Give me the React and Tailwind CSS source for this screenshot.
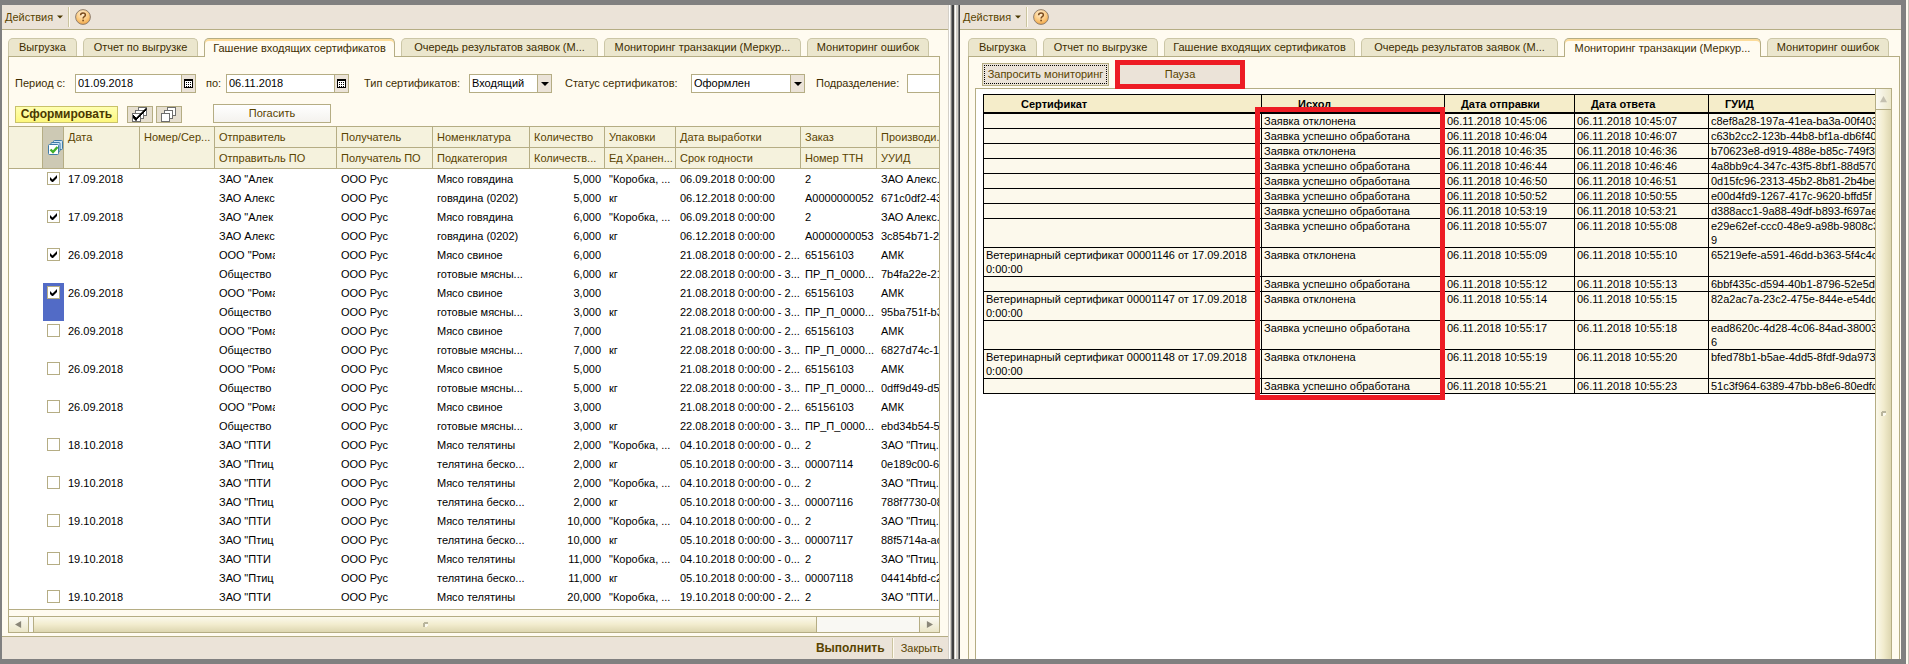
import React, { useState } from 'react';

const TABS = [
  { id: 'export', label: 'Выгрузка', width: 'w-[69px]' },
  { id: 'report', label: 'Отчет по выгрузке', width: 'w-[115px]' },
  { id: 'redeem', label: 'Гашение входящих сертификатов', width: 'w-[191px]' },
  { id: 'queue', label: 'Очередь результатов заявок (М...', width: 'w-[197px]' },
  { id: 'monitor', label: 'Мониторинг транзакции (Меркур...', width: 'w-[197px]' },
  { id: 'errors', label: 'Мониторинг ошибок', width: 'w-[122px]' },
];

const GRID_COLUMNS = [
  { top: 'Отправитель', bottom: 'Отправитьль ПО' },
  { top: 'Получатель', bottom: 'Получатель ПО' },
  { top: 'Номенклатура', bottom: 'Подкатегория' },
  { top: 'Количество', bottom: 'Количеств...' },
  { top: 'Упаковки', bottom: 'Ед Хранен...' },
  { top: 'Дата выработки', bottom: 'Срок годности' },
  { top: 'Заказ', bottom: 'Номер ТТН' },
  { top: 'Производи...', bottom: 'УУИД' },
];

const RUS = 'ООО Рус';
const BOX = '"Коробка, ...';

const beef = (qty, ttn, uuid) => ({
  date: '17.09.2018',
  checked: true,
  lines: [
    ['ЗАО "Алек', RUS, 'Мясо говядина', qty, BOX, '06.09.2018 0:00:00', '2', 'ЗАО Алекс...'],
    ['ЗАО Алекс', RUS, 'говядина (0202)', qty, 'кг', '06.12.2018 0:00:00', ttn, uuid],
  ],
});

const pork = (qty, uuid, checked = false) => ({
  date: '26.09.2018',
  checked,
  lines: [
    ['ООО "Рома', RUS, 'Мясо свиное', qty, '', '21.08.2018 0:00:00 - 2...', '65156103', 'АМК'],
    ['Общество', RUS, 'готовые мясны...', qty, 'кг', '22.08.2018 0:00:00 - 3...', 'ПР_П_0000...', uuid],
  ],
});

const veal = (date, qty, ttn, uuid) => ({
  date,
  checked: false,
  lines: [
    ['ЗАО "ПТИ', RUS, 'Мясо телятины', qty, BOX, '04.10.2018 0:00:00 - 0...', '2', 'ЗАО "Птиц...'],
    ['ЗАО "Птиц', RUS, 'телятина беско...', qty, 'кг', '05.10.2018 0:00:00 - 3...', ttn, uuid],
  ],
});

const RECORDS = [
  beef('5,000', 'A0000000052', '671c0df2-43'),
  beef('6,000', 'A0000000053', '3c854b71-2'),
  pork('6,000', '7b4fa22e-21', true),
  pork('3,000', '95ba751f-b3', true),
  pork('7,000', '6827d74c-1'),
  pork('5,000', '0dff9d49-d5'),
  pork('3,000', 'ebd34b54-5'),
  veal('18.10.2018', '2,000', '00007114', '0e189c00-6'),
  veal('19.10.2018', '2,000', '00007116', '788f7730-08'),
  veal('19.10.2018', '10,000', '00007117', '88f5714a-ac'),
  veal('19.10.2018', '11,000', '00007118', '04414bfd-c2'),
  {
    date: '19.10.2018',
    checked: false,
    lines: [['ЗАО "ПТИ', RUS, 'Мясо телятины', '20,000', BOX, '19.10.2018 0:00:00 - 2...', '2', 'ЗАО "ПТИ...']],
  },
];

const SELECTED_ROW = 3;

const REJECTED = 'Заявка отклонена';
const DONE = 'Заявка успешно обработана';

const LOG = [
  ['', REJECTED, '10:45:06', '10:45:07', 'c8ef8a28-197a-41ea-ba3a-00f403'],
  ['', DONE, '10:46:04', '10:46:07', 'c63b2cc2-123b-44b8-bf1a-db6f40'],
  ['', REJECTED, '10:46:35', '10:46:36', 'b70623e8-d919-488e-b85c-749f30'],
  ['', DONE, '10:46:44', '10:46:46', '4a8bb9c4-347c-43f5-8bf1-88d570'],
  ['', DONE, '10:46:50', '10:46:51', '0d15fc96-2313-45b2-8b81-2b4be2'],
  ['', DONE, '10:50:52', '10:50:55', 'e00d4fd9-1267-417c-9620-bffd5f'],
  ['', DONE, '10:53:19', '10:53:21', 'd388acc1-9a88-49df-b893-f697ae'],
  ['', DONE, '10:55:07', '10:55:08', 'e29e62ef-ccc0-48e9-a98b-9808c3\n9'],
  ['Ветеринарный сертификат 00001146 от 17.09.2018\n0:00:00', REJECTED, '10:55:09', '10:55:10', '65219efe-a591-46dd-b363-5f4c4c'],
  ['', DONE, '10:55:12', '10:55:13', '6bbf435c-d594-40b1-8796-52e5d9'],
  ['Ветеринарный сертификат 00001147 от 17.09.2018\n0:00:00', REJECTED, '10:55:14', '10:55:15', '82a2ac7a-23c2-475e-844e-e54dd'],
  ['', DONE, '10:55:17', '10:55:18', 'ead8620c-4d28-4c06-84ad-38003\n6'],
  ['Ветеринарный сертификат 00001148 от 17.09.2018\n0:00:00', REJECTED, '10:55:19', '10:55:20', 'bfed78b1-b5ae-4dd5-8fdf-9da973'],
  ['', DONE, '10:55:21', '10:55:23', '51c3f964-6389-47bb-b8e6-80edfc'],
];

function HelpIcon() {
  return (
    <svg viewBox="0 0 16 16" className="size-4">
      <defs>
        <radialGradient id="help" cx="0.45" cy="0.3" r="0.75">
          <stop offset="0" stopColor="#fff0d4" />
          <stop offset="0.6" stopColor="#fbc77a" />
          <stop offset="1" stopColor="#ef9f3c" />
        </radialGradient>
      </defs>
      <circle cx="8" cy="8" r="7.4" fill="url(#help)" stroke="#8f7f70" />
      <path d="M5.6 6.2c0-3 4.8-3 4.8-.2 0 1.8-2.3 1.6-2.3 3.5" fill="none" stroke="#7a4a1c" strokeWidth="1.5" />
      <rect x="7.3" y="10.7" width="1.6" height="1.6" fill="#7a4a1c" />
    </svg>
  );
}

function CalendarIcon() {
  return (
    <svg viewBox="0 0 9 9" className="size-[9px]" shapeRendering="crispEdges">
      <rect width="9" height="9" fill="#000" />
      <rect x="1" y="2" width="7" height="6" fill="#fff" />
      <path d="M2 3h1v1H2zM4 3h1v1H4zM6 3h1v1H6zM2 5h1v1H2zM4 5h1v1H4zM6 5h1v1H6zM2 7h1v1H2zM4 7h1v1H4zM6 7h1v1H6z" fill="#000" />
    </svg>
  );
}

function StackIcon({ checked = false }) {
  return (
    <svg viewBox="0 0 16 15" className="h-[15px] w-4" shapeRendering="crispEdges">
      <g fill="#fff" stroke="#6e6e6e">
        <rect x="6.5" y="0.5" width="8" height="8" />
        <rect x="3.5" y="3.5" width="8" height="8" />
        <rect x="0.5" y="6.5" width="8" height="8" />
      </g>
      {checked && (
        <path d="M1 8l3 3L14 1v2L4 13.500L1 11z" fill="#000" stroke="#000" strokeWidth="0.6" />
      )}
    </svg>
  );
}

function CheckedPagesIcon() {
  return (
    <svg viewBox="0 0 15 15" className="size-[15px]">
      <g fill="#cfe4f4" stroke="#3f7ba8">
        <rect x="5.500" y="0.5" width="9" height="9" rx="1" />
        <rect x="3" y="2.500" width="9" height="9" rx="1" />
        <rect x="0.5" y="4.500" width="10" height="10" rx="1" fill="#fff" />
      </g>
      <path d="M2.500 9.500l2.500 2.500 4.500-5" fill="none" stroke="#3fae2a" strokeWidth="2.400" />
    </svg>
  );
}

function Arrow({ dir, className }) {
  const paths = {
    down: 'M0 2h8L4 6z',
    up: 'M0 7h8L4 0z',
    left: 'M7 0v8L0 4z',
    right: 'M1 0v8l7-4z',
  };
  return (
    <svg viewBox="0 0 8 8" className={className} fill="currentColor">
      <path d={paths[dir]} />
    </svg>
  );
}

function Grip() {
  return (
    <svg viewBox="0 0 5 5" className="size-[5px]" shapeRendering="crispEdges">
      <path d="M1 0h4v2H2v3H0V1h1z" fill="#b9b59c" />
      <path d="M2 2h3v2H4v1H2z" fill="#fbf9ee" />
    </svg>
  );
}

function Separator() {
  return <span className="h-5 w-[2px] bg-linear-to-r from-[#cbc4a0] from-50% to-[#fffbf0] to-50%" />;
}

function Toolbar() {
  return (
    <div className="flex h-[25px] shrink-0 items-center border-b border-[#b5ad84] bg-[#ebe3d8] pl-[3px] text-[#594300]">
      <button className="flex items-center gap-1">
        Действия
        <Arrow dir="down" className="h-[6px] w-[6px] text-[#4a3800]" />
      </button>
      <span className="ml-[5px] flex"><Separator /></span>
      <button aria-label="Справка" className="ml-[5px]">
        <HelpIcon />
      </button>
    </div>
  );
}

function Tabs({ active }) {
  return (
    <div role="tablist" className="relative flex shrink-0 items-start gap-[6px] pt-2">
      {TABS.map((tab) => (
        <button
          key={tab.id}
          role="tab"
          aria-selected={tab.id === active}
          className={`overflow-hidden rounded-t-[5px] border border-b-0 text-center whitespace-nowrap text-[#3d2d00] ${tab.width} ${
            tab.id === active
              ? '-mb-px h-[19px] border-[#b5ad84] bg-[#fffbf0] shadow-[inset_0_2px_0_#fcdc9a]'
              : 'h-[18px] border-[#cbc6a6] bg-[#ebe6cd]'
          }`}
        >
          {tab.label}
        </button>
      ))}
    </div>
  );
}

function DateField({ id, label, value, labelClass, fieldClass }) {
  const [date, setDate] = useState(value);
  return (
    <>
      <label htmlFor={id} className={`shrink-0 ${labelClass}`}>{label}</label>
      <div className={`flex h-[19px] shrink-0 border border-[#b5ad84] bg-white ${fieldClass}`}>
        <input
          id={id}
          value={date}
          onChange={(e) => setDate(e.target.value)}
          className="min-w-0 flex-1 px-[2px] text-black outline-none"
        />
        <button aria-label="Выбрать дату" className="flex w-[14px] items-center justify-center border-l border-[#b5ad84] bg-[#ebe3d8]">
          <CalendarIcon />
        </button>
      </div>
    </>
  );
}

function SelectField({ id, label, value, labelClass, fieldClass }) {
  return (
    <>
      <label htmlFor={id} className={`shrink-0 ${labelClass}`}>{label}</label>
      <div className={`relative h-[19px] shrink-0 border border-[#b5ad84] bg-white ${fieldClass}`}>
        <select id={id} className="block h-full w-full appearance-none px-[2px] text-black outline-none">
          <option>{value}</option>
        </select>
        <span className="pointer-events-none absolute inset-y-0 right-0 flex w-[14px] items-center justify-center border-l border-[#b5ad84] bg-[#ebe3d8] text-black">
          <Arrow dir="down" className="size-2" />
        </span>
      </div>
    </>
  );
}

function RowCheck({ label, defaultChecked }) {
  return (
    <span className="mx-auto grid size-[13px]">
      <input
        type="checkbox"
        aria-label={label}
        defaultChecked={defaultChecked}
        className="peer col-start-1 row-start-1 size-[13px] appearance-none border border-[#b5ad84] bg-white"
      />
      <svg viewBox="0 0 13 13" className="pointer-events-none invisible col-start-1 row-start-1 size-[13px] peer-checked:visible">
        <path d="M3 5v3l2 2h1l4-4V3L5.500 7.500z" fill="#000" />
      </svg>
    </span>
  );
}

function CertificateGrid() {
  const th = 'h-[21px] border-r border-b border-[#b5ad84] px-[4px] text-left font-normal';
  return (
    <div className="min-h-0 flex-1 overflow-hidden border-y border-[#b5ad84] bg-white">
      <table className="w-full table-fixed border-separate border-spacing-0 whitespace-nowrap text-black">
        <colgroup>
          <col className="w-[34px]" />
          <col className="w-[21px]" />
          <col className="w-[76px]" />
          <col className="w-[75px]" />
          <col className="w-[122px]" />
          <col className="w-[96px]" />
          <col className="w-[97px]" />
          <col className="w-[75px]" />
          <col className="w-[71px]" />
          <col className="w-[125px]" />
          <col className="w-[76px]" />
          <col />
        </colgroup>
        <thead className="bg-[#f5f2dd] text-[#594300]">
          <tr>
            <th rowSpan={2} className={th} />
            <th rowSpan={2} className="border-r border-b border-[#b5ad84] bg-[#cdc9b4]">
              <span className="flex justify-end"><CheckedPagesIcon /></span>
            </th>
            <th rowSpan={2} className={`${th} pt-[3px] align-top`}>Дата</th>
            <th rowSpan={2} className={`${th} pt-[3px] align-top`}>Номер/Сер...</th>
            {GRID_COLUMNS.map((c) => (
              <th key={c.top} className={`${th} overflow-hidden last:border-r-0`}>{c.top}</th>
            ))}
          </tr>
          <tr>
            {GRID_COLUMNS.map((c) => (
              <th key={c.bottom} className={`${th} overflow-hidden last:border-r-0`}>{c.bottom}</th>
            ))}
          </tr>
        </thead>
        <tbody>
          {RECORDS.map((rec, i) =>
            rec.lines.map((line, j) => (
              <tr key={`${i}-${j}`} className="h-[19px]">
                {j === 0 && (
                  <>
                    <td rowSpan={rec.lines.length} />
                    <td rowSpan={rec.lines.length} className={`pt-[3px] align-top ${i === SELECTED_ROW ? 'bg-[#526bc6]' : ''}`}>
                      <RowCheck label={rec.date} defaultChecked={rec.checked} />
                    </td>
                    <td rowSpan={rec.lines.length} className="px-[4px] pt-[3px] align-top">{rec.date}</td>
                    <td rowSpan={rec.lines.length} />
                  </>
                )}
                {line.map((text, k) => (
                  <td key={k} className={`h-[19px] overflow-hidden px-[4px] pt-[3px] align-top ${k === 3 ? 'text-right' : ''}`}>
                    {k === 0 ? <span className="block w-[56px] overflow-hidden">{text}</span> : text}
                  </td>
                ))}
              </tr>
            ))
          )}
        </tbody>
      </table>
    </div>
  );
}

function HorizontalScroll() {
  const edge = 'flex w-5 items-center justify-center bg-linear-to-b from-[#fbfaf4] to-[#ebe6c8] text-[#8a8678]';
  return (
    <div className="mt-[6px] flex h-4 shrink-0 border-t border-[#b5ad84] bg-[#f9f8f3]">
      <button aria-label="Влево" className={`${edge} border-r border-[#b5ad84]`}>
        <Arrow dir="left" className="size-[7px]" />
      </button>
      <div className="flex flex-1 pr-[102px] pl-1">
        <div className="flex flex-1 items-center justify-center border-x border-[#b5ad84] bg-linear-to-b from-[#fbf9ec] via-[#f2ecce] to-[#ddd6b0]">
          <Grip />
        </div>
      </div>
      <button aria-label="Вправо" className={`${edge} border-l border-[#b5ad84]`}>
        <Arrow dir="right" className="size-[7px]" />
      </button>
    </div>
  );
}

function RedeemPane() {
  const iconButton = 'flex h-[17px] w-[26px] items-center justify-center border border-[#b5ad84] bg-[#e6dfd0]';
  return (
    <section className="flex min-w-0 flex-[946_1_0%] flex-col bg-[#fffbf0]">
      <Toolbar />
      <div className="mr-2 ml-[6px] flex min-h-0 flex-1 flex-col">
        <Tabs active="redeem" />
        <div className="flex min-h-0 flex-1 flex-col border border-[#b5ad84]">
          <div className="flex items-center overflow-hidden pt-[17px] pl-[6px] whitespace-nowrap text-[#3d2d00]">
            <DateField id="from" label="Период с:" value="01.09.2018" labelClass="w-[60px]" fieldClass="w-[121px]" />
            <DateField id="to" label="по:" value="06.11.2018" labelClass="ml-[10px] w-5" fieldClass="w-[123px]" />
            <SelectField id="type" label="Тип сертификатов:" value="Входящий" labelClass="ml-[15px] w-[105px]" fieldClass="w-[83px]" />
            <SelectField id="status" label="Статус сертификатов:" value="Оформлен" labelClass="ml-[13px] w-[126px]" fieldClass="w-[114px]" />
            <label htmlFor="unit" className="ml-[11px] w-[91px] shrink-0">Подразделение:</label>
            <input id="unit" className="h-[19px] min-w-0 flex-1 border border-r-0 border-[#b5ad84] bg-white px-[2px] text-black outline-none" />
          </div>
          <div className="flex items-end pt-[11px] pb-[3px] pl-[6px]">
            <button className="h-[17px] w-[103px] border border-[#c9c26a] bg-linear-to-b from-[#ffffb0] to-[#fdf77c] text-xs leading-[15px] font-bold text-[#4a3800]">
              Сформировать
            </button>
            <button aria-label="Отметить все" className={`${iconButton} ml-[9px]`}><StackIcon checked /></button>
            <button aria-label="Снять отметки" className={`${iconButton} ml-[3px]`}><StackIcon /></button>
            <button className="ml-[31px] h-[19px] w-[118px] border border-[#b5ad84] bg-linear-to-b from-white to-[#f4f2ee] leading-[17px] text-[#594300]">
              Погасить
            </button>
          </div>
          <CertificateGrid />
          <HorizontalScroll />
        </div>
      </div>
      <footer className="mt-[3px] flex h-[23px] shrink-0 items-center justify-end gap-[7px] border-t border-[#b5ad84] bg-[#ebe3d8] pr-[5px] text-[#594300]">
        <button className="text-xs font-bold">Выполнить</button>
        <Separator />
        <button>Закрыть</button>
      </footer>
    </section>
  );
}

function TransactionLog() {
  const th = 'h-[19px] border-r border-b-2 border-black text-left font-bold leading-[14px]';
  const td = 'h-[15px] border-r border-b border-black px-[2px] align-top';
  return (
    <div className="relative w-max">
      <table className="w-[926px] table-fixed border-separate border-spacing-0 border-t border-l border-black bg-[#fcf9ec] leading-[14px] whitespace-pre text-black">
        <colgroup>
          <col className="w-[278px]" />
          <col className="w-[183px]" />
          <col className="w-[130px]" />
          <col className="w-[134px]" />
          <col />
        </colgroup>
        <thead className="bg-[#f5edca]">
          <tr>
            <th className={`${th} pl-[37px]`}>Сертификат</th>
            <th className={`${th} pl-[36px]`}>Исход</th>
            <th className={`${th} pl-4`}>Дата отправки</th>
            <th className={`${th} pl-4`}>Дата ответа</th>
            <th className={`${th} pl-4`}>ГУИД</th>
          </tr>
        </thead>
        <tbody>
          {LOG.map(([cert, outcome, sent, answered, guid]) => (
            <tr key={guid}>
              <td className={td}>{cert}</td>
              <td className={td}>{outcome}</td>
              <td className={td}>06.11.2018 {sent}</td>
              <td className={td}>06.11.2018 {answered}</td>
              <td className={td}>{guid}</td>
            </tr>
          ))}
        </tbody>
      </table>
      {/* Highlight around the outcome column */}
      <div className="pointer-events-none absolute top-[13px] -bottom-[6px] left-[272px] w-[190px] border-[5px] border-[#ed1c24]" />
    </div>
  );
}

function MonitorPane() {
  return (
    <section className="flex min-w-0 flex-[941_1_0%] flex-col bg-[#fffbf0]">
      <Toolbar />
      <div className="mr-px ml-2 flex min-h-0 flex-1 flex-col">
        <Tabs active="monitor" />
        <div className="flex min-h-0 flex-1 flex-col border border-b-0 border-[#b5ad84] pr-[7px] pl-[6px]">
          <div className="relative z-10 flex items-center gap-[11px] pt-[6px] pb-[2px] pl-[7px] text-[#594300]">
            <button className="h-[23px] w-[127px] border border-[#b5ad84] bg-[#ebe3d8] p-px whitespace-nowrap">
              <span className="flex h-full items-center justify-center border border-dotted border-black">
                Запросить мониторинг
              </span>
            </button>
            <button className="h-[19px] w-[120px] bg-[#ebe3d8] ring-[5px] ring-[#ed1c24]">Пауза</button>
          </div>
          <div className="flex min-h-0 flex-1 border border-b-0 border-[#b5ad84] bg-white">
            <div className="min-w-0 flex-1 overflow-hidden pt-[5px] pl-[7px]">
              <TransactionLog />
            </div>
            <div className="flex w-4 shrink-0 flex-col border-l border-[#b5ad84]">
              <button aria-label="Вверх" className="flex h-[21px] items-center justify-center border-b border-[#b5ad84] bg-linear-to-r from-[#fbfaf4] to-[#ebe6c8] text-[#c4c0b0]">
                <Arrow dir="up" className="size-[7px]" />
              </button>
              <div className="flex flex-1 justify-center bg-linear-to-r from-[#fbf9ec] via-[#f2ecce] to-[#ddd6b0] pt-[301px]">
                <Grip />
              </div>
            </div>
          </div>
        </div>
      </div>
    </section>
  );
}

export default function App() {
  return (
    <div className="flex h-screen overflow-hidden bg-[#808080] font-['Liberation_Sans',Arial,sans-serif] text-[11px] leading-[15px]">
      <main className="flex min-w-0 flex-1 py-[5px] pr-[5px] pl-[2px]">
        <RedeemPane />
        {/* Window frames meeting between the two panes */}
        <div className="flex w-3 shrink-0 bg-[#d4d0c8]">
          <span className="w-[3px] border-x border-[#d4d0c8] bg-white" />
          <span className="w-[3px] border-l border-[#808080] bg-[#404040]" />
          <span className="ml-px w-px bg-white" />
          <span className="ml-auto w-[2px] border-l border-[#808080] bg-[#404040]" />
        </div>
        <MonitorPane />
      </main>
      <div className="w-[3px] shrink-0 border-r border-[#c8c0b8] bg-[#fffbf0]" />
    </div>
  );
}
